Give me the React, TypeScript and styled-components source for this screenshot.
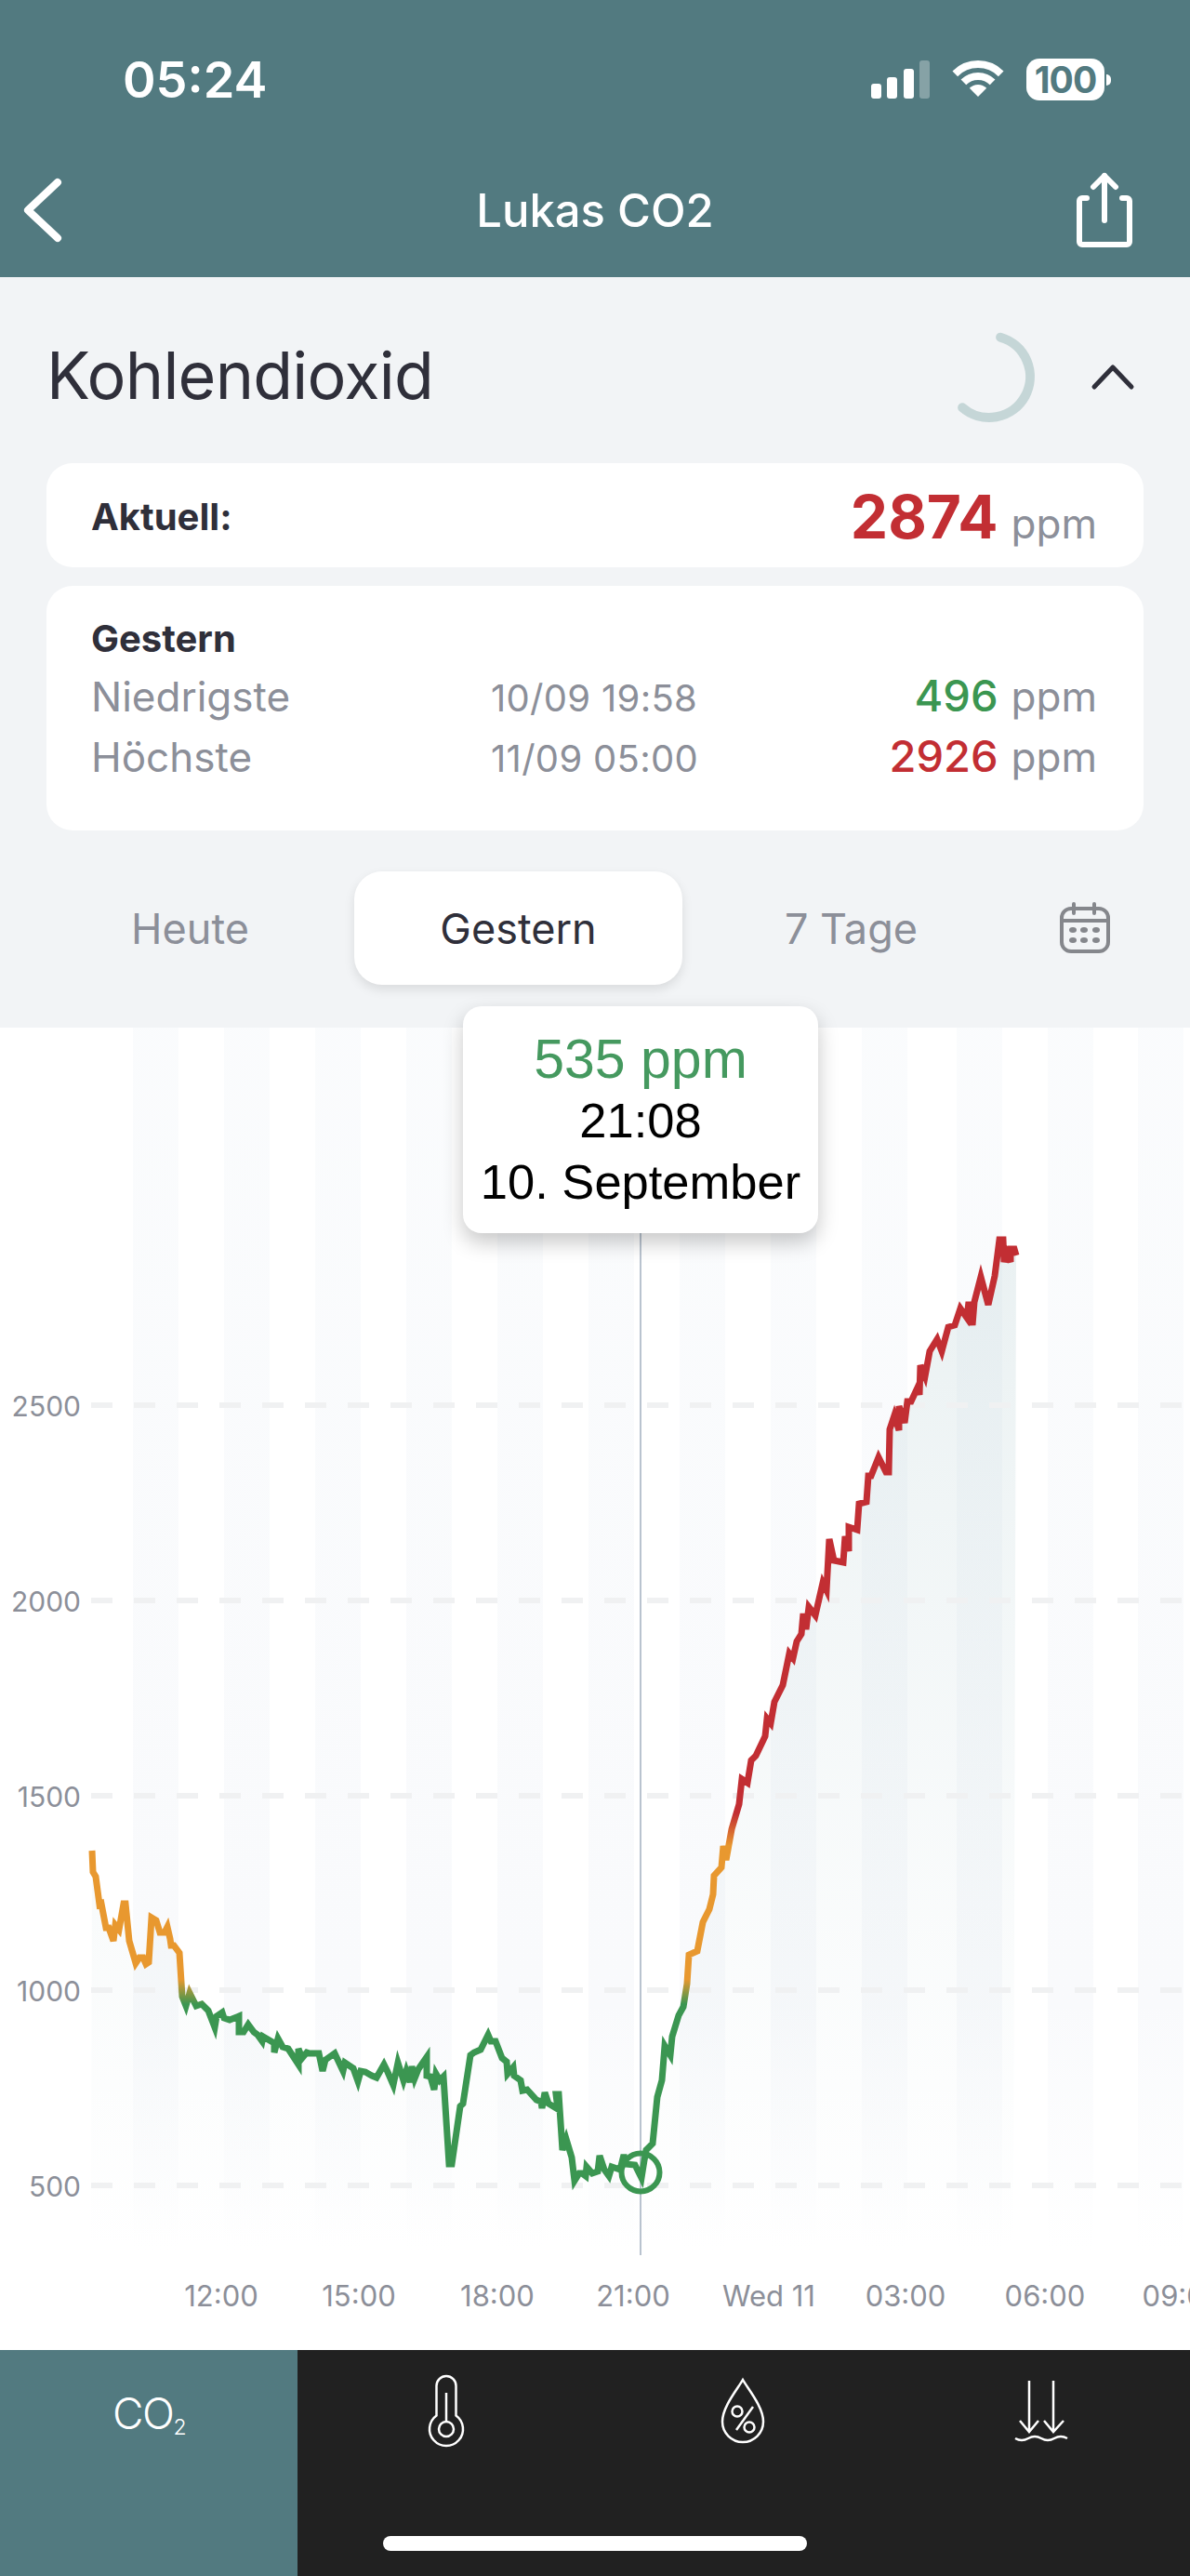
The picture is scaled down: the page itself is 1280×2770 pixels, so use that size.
import styled, { createGlobalStyle } from "styled-components";

const TEAL = "#527a80";
const GREY = "#8c8f99";
const DARK = "#2f2f3a";
const GREEN = "#3b9651";
const RED = "#c22e33";
const ORANGE = "#e8982f";

const GlobalStyle = createGlobalStyle`
  html, body {
    margin: 0;
    padding: 0;
    background: #fff;
  }
  body {
    font-family: Inter, "Liberation Sans", sans-serif;
  }
`;

const Page = styled.div`
  width: 1280px;
  height: 2770px;
  overflow: hidden;
  background: #f2f4f6;
  display: flex;
  flex-direction: column;
`;

const Header = styled.header`
  height: 298px;
  background: ${TEAL};
  color: #fff;
`;

const StatusBar = styled.div`
  height: 154px;
  box-sizing: border-box;
  padding: 16px 92px 0 132px;
  display: flex;
  align-items: center;
  justify-content: space-between;
`;

const Time = styled.span`
  font-size: 54px;
  font-weight: 600;
`;

const StatusIcons = styled.div`
  display: flex;
  align-items: center;
  gap: 24px;
`;

const Battery = styled.div`
  position: relative;
  width: 84px;
  height: 45px;
  border-radius: 14px;
  background: #fff;
  color: ${TEAL};
  font-size: 39px;
  font-weight: 700;
  letter-spacing: -1px;
  text-align: center;
  line-height: 45px;

  &::after {
    content: "";
    position: absolute;
    left: 86px;
    top: 17px;
    width: 5px;
    height: 12px;
    border-radius: 0 6px 6px 0;
    background: #fff;
  }
`;

const NavBar = styled.nav`
  height: 144px;
  display: grid;
  grid-template-columns: 1fr auto 1fr;
  align-items: center;
  padding: 0 60px 0 24px;

  svg:last-child {
    justify-self: end;
  }
`;

const NavTitle = styled.h1`
  margin: 0;
  font-size: 49px;
  font-weight: 500;
  transform: translateX(18px);
`;

const Content = styled.section`
  padding: 0 50px;
  display: flex;
  flex-direction: column;
`;

const TitleRow = styled.div`
  height: 186px;
  padding: 14px 8px 0 0;
  display: flex;
  align-items: center;
`;

const Title = styled.h2`
  margin: 0 0 4px;
  flex: 1;
  font-size: 70px;
  font-weight: 400;
  letter-spacing: -0.75px;
  color: ${DARK};
`;

const Spinner = styled.svg`
  margin-right: 56px;
`;

const Card = styled.div<{ $height: number }>`
  height: ${(p) => p.$height}px;
  box-sizing: border-box;
  background: #fff;
  border-radius: 28px;
  padding: 0 50px 0 48px;
  margin-bottom: 20px;
`;

const CurrentRow = styled.div`
  height: 100%;
  box-sizing: border-box;
  padding-top: 2px;
  display: flex;
  align-items: center;
  justify-content: space-between;
`;

const Label = styled.span`
  font-size: 40px;
  font-weight: 700;
  color: ${DARK};
`;

const BigValue = styled.span`
  font-size: 64px;
  font-weight: 700;
  color: ${RED};
`;

const Unit = styled.span`
  font-size: 44px;
  color: ${GREY};
  margin-left: 14px;
`;

const CardLabel = styled(Label)`
  display: block;
  padding-top: 34px;
  padding-bottom: 5px;
  line-height: 46px;
`;

const StatRow = styled.div`
  display: grid;
  grid-template-columns: 430px 1fr auto;
  align-items: baseline;
  height: 65px;
  line-height: 65px;
`;

const StatName = styled.span`
  font-size: 44px;
  color: ${GREY};
`;

const StatDate = styled.span`
  font-size: 40px;
  letter-spacing: 0.3px;
  color: ${GREY};
`;

const StatValue = styled.span<{ $color: string }>`
  font-size: 47px;
  font-weight: 500;
  color: ${(p) => p.$color};
`;

const Tabs = styled.div`
  display: flex;
  align-items: center;
  margin: 24px 0 46px -22px;
`;

const Tab = styled.div<{ $active?: boolean; $nudge?: number }>`
  width: 353px;
  height: 122px;
  margin-left: ${(p) => p.$nudge ?? 0}px;
  display: flex;
  align-items: center;
  justify-content: center;
  border-radius: 30px;
  font-size: 45px;
  color: ${(p) => (p.$active ? DARK : GREY)};
  background: ${(p) => (p.$active ? "#fff" : "transparent")};
  box-shadow: ${(p) => (p.$active ? "0 5px 12px rgba(0, 0, 0, 0.1)" : "none")};
`;

const CalendarIcon = styled.svg`
  margin-left: 45px;
`;

const Chart = styled.div`
  position: relative;
  height: 1422px;
  background: #fff;

  svg {
    display: block;
  }
`;

const Tooltip = styled.div`
  position: absolute;
  left: 498px;
  top: -23px;
  width: 382px;
  height: 244px;
  box-sizing: border-box;
  padding-top: 24px;
  background: #fff;
  border-radius: 20px;
  box-shadow: 0 10px 22px rgba(0, 0, 0, 0.22);
  font-family: "Liberation Sans", Arial, sans-serif;
  font-size: 52.5px;
  line-height: 66px;
  text-align: center;
  color: #000;
`;

const TooltipValue = styled.div`
  font-size: 59px;
  color: #45995f;
`;

const TabBar = styled.div`
  position: relative;
  flex: 1;
  display: grid;
  grid-template-columns: repeat(4, 1fr);
  background: #212121;
  color: #fff;
`;

const BarItem = styled.div<{ $active?: boolean }>`
  padding-top: 24px;
  display: flex;
  justify-content: center;
  align-items: flex-start;
  background: ${(p) => (p.$active ? TEAL : "transparent")};
`;

const Co2 = styled.span`
  font-size: 46px;
  font-weight: 300;
  line-height: 88px;
  letter-spacing: -1.5px;

  sub {
    font-size: 23px;
    line-height: 0;
    vertical-align: -6px;
  }
`;

const HomeIndicator = styled.div`
  position: absolute;
  left: 412px;
  bottom: 27px;
  width: 456px;
  height: 16px;
  border-radius: 8px;
  background: #fff;
`;

// page coordinates of the measured curve
const curve: [number, number][] = [
  [99, 1990], [100, 2013], [103, 2018], [107, 2048], [109, 2047], [114, 2073], [117, 2073], [122, 2087], [124, 2070], [128, 2075],
  [133, 2047], [135, 2047], [139, 2087], [146, 2111], [150, 2105], [154, 2105], [157, 2112], [160, 2110], [163, 2062], [168, 2065],
  [172, 2078], [177, 2078], [180, 2072], [183, 2085], [184, 2092], [187, 2092], [193, 2100], [196, 2147], [200, 2157], [204, 2143],
  [211, 2157], [217, 2155], [224, 2162], [231, 2180], [233, 2168], [239, 2164], [241, 2170], [247, 2172], [257, 2168], [257, 2185],
  [262, 2185], [267, 2177], [273, 2185], [277, 2188], [282, 2195], [283, 2190], [295, 2197], [295, 2207], [299, 2192], [304, 2201],
  [310, 2203], [321, 2220], [321, 2203], [325, 2213], [330, 2207], [333, 2208], [343, 2208], [347, 2227], [350, 2215], [360, 2208],
  [369, 2227], [371, 2218], [380, 2224], [385, 2238], [388, 2227], [393, 2228], [400, 2232], [405, 2234], [413, 2220], [417, 2228],
  [423, 2242], [428, 2218], [434, 2237], [437, 2227], [441, 2239], [443, 2222], [446, 2235], [450, 2225], [459, 2212], [459, 2232],
  [463, 2233], [467, 2247], [469, 2230], [473, 2237], [477, 2233], [483, 2327], [486, 2327], [495, 2265], [498, 2262], [506, 2210],
  [510, 2207], [517, 2204], [525, 2188], [528, 2195], [533, 2195], [540, 2213], [545, 2217], [546, 2230], [552, 2223], [553, 2232],
  [560, 2237], [562, 2248], [567, 2247], [577, 2258], [582, 2260], [583, 2267], [586, 2250], [590, 2262], [600, 2268], [598, 2252],
  [601, 2252], [605, 2312], [609, 2300], [615, 2320], [618, 2345], [623, 2337], [626, 2337], [630, 2340], [631, 2330], [637, 2337],
  [643, 2335], [645, 2318], [650, 2333], [655, 2340], [658, 2330], [667, 2333], [671, 2317], [673, 2327], [683, 2328], [690, 2342],
  [693, 2323], [695, 2312], [702, 2305], [707, 2255], [712, 2237], [715, 2200], [721, 2210], [723, 2190], [730, 2167], [735, 2158],
  [739, 2133], [741, 2102], [750, 2098], [756, 2067], [763, 2053], [767, 2037], [768, 2017], [776, 2008], [778, 1985], [781, 2000],
  [787, 1967], [795, 1940], [798, 1913], [804, 1917], [808, 1893], [813, 1888], [823, 1867], [825, 1848], [829, 1853], [833, 1830],
  [842, 1812], [849, 1778], [853, 1783], [857, 1765], [862, 1757], [864, 1735], [867, 1752], [870, 1728], [877, 1737], [885, 1702],
  [889, 1710], [892, 1655], [897, 1678], [907, 1680], [909, 1652], [913, 1668], [913, 1642], [922, 1645], [924, 1617], [932, 1615],
  [934, 1587], [937, 1587], [945, 1567], [953, 1583], [956, 1583], [957, 1537], [962, 1522], [967, 1538], [967, 1512], [973, 1530],
  [976, 1507], [980, 1507], [987, 1492], [989, 1500], [990, 1468], [995, 1480], [1000, 1453], [1008, 1440], [1013, 1453], [1020, 1427],
  [1027, 1425], [1033, 1407], [1040, 1417], [1042, 1400], [1046, 1425], [1048, 1400], [1055, 1373], [1063, 1403], [1070, 1372], [1075, 1333],
  [1079, 1333], [1080, 1357], [1083, 1348], [1087, 1357], [1087, 1343], [1091, 1343], [1093, 1350],
];

const linePath = curve.map(([x, y], i) => `${i ? "L" : "M"}${x} ${y}`).join(" ");
const areaPath = `${linePath} L1090 2430 L98 2430 Z`;

const bands = [143, 241, 339, 437, 535, 633, 731, 829, 927, 1029, 1127, 1224];
const yTicks = [
  { label: "2500", y: 1511 },
  { label: "2000", y: 1721 },
  { label: "1500", y: 1931 },
  { label: "1000", y: 2140 },
  { label: "500", y: 2350 },
];
const xTicks = [
  { label: "12:00", x: 238 },
  { label: "15:00", x: 386 },
  { label: "18:00", x: 535 },
  { label: "21:00", x: 681 },
  { label: "Wed 11", x: 827 },
  { label: "03:00", x: 974 },
  { label: "06:00", x: 1124 },
  { label: "09:00", x: 1272 },
];

const axisText = { fontFamily: "Inter, sans-serif", fontSize: 31, fill: GREY };

const ChartDrawing = () => (
  <svg width="1280" height="1422" viewBox="0 1105 1280 1422">
    <defs>
      <linearGradient id="band" gradientUnits="userSpaceOnUse" x1="0" y1="1105" x2="0" y2="2420">
        <stop offset="0" stopColor="#f8fafc" stopOpacity="0.7" />
        <stop offset="0.8" stopColor="#f9fafc" stopOpacity="1" />
        <stop offset="1" stopColor="#f9fafc" stopOpacity="0" />
      </linearGradient>
      <linearGradient id="area" gradientUnits="userSpaceOnUse" x1="0" y1="1335" x2="0" y2="2430">
        <stop offset="0" stopColor="#4f8a94" stopOpacity="0.12" />
        <stop offset="0.6" stopColor="#4f8a94" stopOpacity="0.04" />
        <stop offset="1" stopColor="#4f8a94" stopOpacity="0" />
      </linearGradient>
      <linearGradient id="co2Line" gradientUnits="userSpaceOnUse" x1="0" y1="1950" x2="0" y2="2155">
        <stop offset="0" stopColor={RED} />
        <stop offset="0.17" stopColor={ORANGE} />
        <stop offset="0.87" stopColor={ORANGE} />
        <stop offset="1" stopColor={GREEN} />
      </linearGradient>
    </defs>
    {bands.map((x) => (
      <rect key={x} x={x} y="1105" width="49" height="1315" fill="url(#band)" />
    ))}
    <path d={areaPath} fill="url(#area)" />
    {yTicks.map((t) => (
      <g key={t.label}>
        <line x1="98" x2="1280" y1={t.y} y2={t.y} stroke="#f0f1f2" strokeWidth="6" strokeDasharray="23 23" />
        <text x="87" y={t.y + 12} textAnchor="end" {...axisText} fontSize="30">
          {t.label}
        </text>
      </g>
    ))}
    {xTicks.map((t) => (
      <text key={t.x} x={t.x} y="2480" textAnchor="middle" {...axisText}>
        {t.label}
      </text>
    ))}
    <line x1="689" x2="689" y1="1326" y2="2425" stroke="#b9c3cf" strokeWidth="2" />
    <path d={linePath} fill="none" stroke="url(#co2Line)" strokeWidth="7" strokeLinejoin="miter" />
    <circle cx="689" cy="2336" r="20.5" fill="none" stroke={GREEN} strokeWidth="6" />
  </svg>
);

export default function App() {
  return (
    <Page>
      <GlobalStyle />
      <Header>
        <StatusBar>
          <Time>05:24</Time>
          <StatusIcons>
            <svg width="64" height="41" viewBox="0 0 64 41" fill="#fff">
              <rect x="1" y="25" width="11" height="16" rx="3" />
              <rect x="18" y="18" width="11" height="23" rx="3" />
              <rect x="36" y="9" width="11" height="32" rx="3" />
              <rect x="53" y="0" width="11" height="41" rx="3" opacity="0.3" />
            </svg>
            <svg width="56" height="40" viewBox="0 0 56 40" fill="none" stroke="#fff" strokeWidth="8">
              <path d="M3.3 14.3A35 35 0 0 1 52.7 14.3" />
              <path d="M12.4 23.4A22 22 0 0 1 43.6 23.4" />
              <path d="M28 39L18.8 29.8A13 13 0 0 1 37.2 29.8Z" fill="#fff" stroke="none" />
            </svg>
            <Battery>100</Battery>
          </StatusIcons>
        </StatusBar>
        <NavBar>
          <svg width="46" height="70" viewBox="0 0 46 70" fill="none" stroke="#fff" strokeWidth="8" strokeLinecap="round" strokeLinejoin="round">
            <path d="M38 5L6 35L38 65" />
          </svg>
          <NavTitle>Lukas CO2</NavTitle>
          <svg width="64" height="82" viewBox="0 0 64 82" fill="none" stroke="#fff" strokeWidth="6" strokeLinecap="round" strokeLinejoin="round">
            <path d="M13 28H8A3 3 0 0 0 5 31V75A3 3 0 0 0 8 78H56A3 3 0 0 0 59 75V31A3 3 0 0 0 56 28H51" />
            <path d="M32 52V4" />
            <path d="M20 16L32 4L44 16" />
          </svg>
        </NavBar>
      </Header>

      <Content>
        <TitleRow>
          <Title>Kohlendioxid</Title>
          <Spinner width="104" height="104" viewBox="0 0 104 104" fill="none" stroke="#c5d6d7" strokeWidth="10" strokeLinecap="round">
            <path d="M64.1 9.7A44 44 0 1 1 23.1 85.2" />
          </Spinner>
          <svg width="50" height="30" viewBox="0 0 50 30" fill="none" stroke={DARK} strokeWidth="5" strokeLinecap="round" strokeLinejoin="round">
            <path d="M5 26L25 5L45 26" />
          </svg>
        </TitleRow>

        <Card $height={112}>
          <CurrentRow>
            <Label>Aktuell:</Label>
            <span>
              <BigValue>2874</BigValue>
              <Unit>ppm</Unit>
            </span>
          </CurrentRow>
        </Card>

        <Card $height={263}>
          <CardLabel>Gestern</CardLabel>
          <StatRow>
            <StatName>Niedrigste</StatName>
            <StatDate>10/09 19:58</StatDate>
            <span>
              <StatValue $color={GREEN}>496</StatValue>
              <Unit>ppm</Unit>
            </span>
          </StatRow>
          <StatRow>
            <StatName>Höchste</StatName>
            <StatDate>11/09 05:00</StatDate>
            <span>
              <StatValue $color={RED}>2926</StatValue>
              <Unit>ppm</Unit>
            </span>
          </StatRow>
        </Card>

        <Tabs>
          <Tab>Heute</Tab>
          <Tab $active>Gestern</Tab>
          <Tab $nudge={5}>7 Tage</Tab>
          <CalendarIcon width="60" height="60" viewBox="0 0 60 60" fill="none" stroke="#85878c" strokeWidth="4" strokeLinecap="round">
            <rect x="5" y="9" width="50" height="46" rx="10" />
            <path d="M5 22H55" />
            <path d="M18 4V14M40 4V14" />
            <g fill="#85878c" stroke="none">
              <ellipse cx="17" cy="32" rx="4" ry="3" />
              <ellipse cx="29" cy="32" rx="4" ry="3" />
              <ellipse cx="42" cy="32" rx="4" ry="3" />
              <ellipse cx="17" cy="43" rx="4" ry="3" />
              <ellipse cx="29" cy="43" rx="4" ry="3" />
              <ellipse cx="42" cy="43" rx="4" ry="3" />
            </g>
          </CalendarIcon>
        </Tabs>
      </Content>

      <Chart>
        <ChartDrawing />
        <Tooltip>
          <TooltipValue>535 ppm</TooltipValue>
          <div>21:08</div>
          <div>10. September</div>
        </Tooltip>
      </Chart>

      <TabBar>
        <BarItem $active>
          <Co2>
            CO<sub>2</sub>
          </Co2>
        </BarItem>
        <BarItem>
          <svg width="48" height="84" viewBox="0 0 48 84" fill="none" stroke="#fff" strokeWidth="2.5">
            <path d="M13.5 46.4V14.5A10.5 10.5 0 0 1 34.5 14.5V46.4A18 18 0 1 1 13.5 46.4Z" />
            <circle cx="24" cy="61" r="8" />
            <path d="M24 22V53" />
          </svg>
        </BarItem>
        <BarItem>
          <svg width="60" height="84" viewBox="0 0 60 84" fill="none" stroke="#fff" strokeWidth="2.5">
            <path d="M29 8C24 17 7 37 7 53A22 22 0 0 0 51 53C51 37 34 17 29 8Z" />
            <circle cx="23" cy="42" r="5.5" />
            <circle cx="36" cy="59" r="5.5" />
            <path d="M40 37L22 62" />
          </svg>
        </BarItem>
        <BarItem>
          <svg width="70" height="84" viewBox="0 0 70 84" fill="none" stroke="#fff" strokeWidth="2.5">
            <path d="M22 9V64M12 52L22 64L32 52" />
            <path d="M48 9V64M38 52L48 64L59 52" />
            <path d="M7 71Q14 75 21 71T35 71T49 71T63 71" />
          </svg>
        </BarItem>
        <HomeIndicator />
      </TabBar>
    </Page>
  );
}
